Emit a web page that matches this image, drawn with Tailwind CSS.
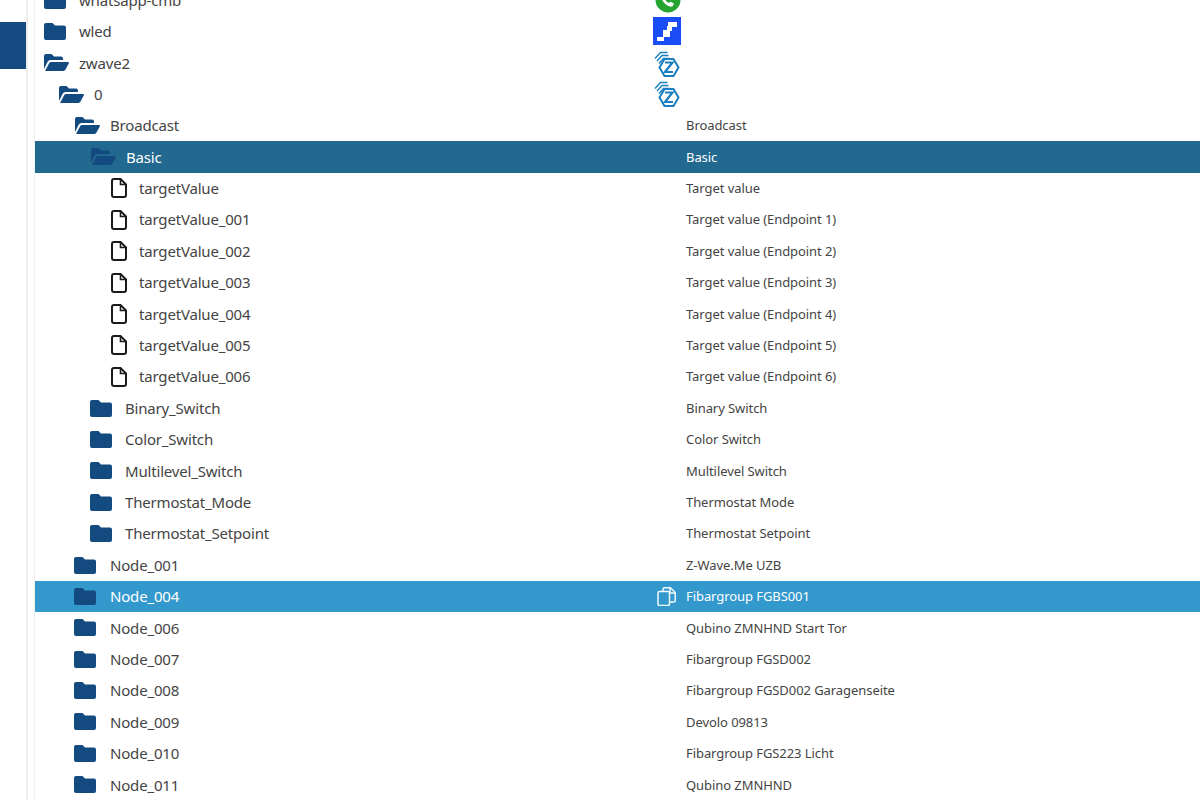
<!DOCTYPE html>
<html lang="de">
<head>
    <meta charset="UTF-8">
    <title>zwave2</title>
    <script src="https://cdn.jsdelivr.net/npm/@tailwindcss/browser@4"></script>
</head>
<body class="bg-white overflow-hidden h-[800px] font-['Noto_Sans','Open_Sans',sans-serif] text-[#444]">
<svg width="0" height="0" class="absolute">
    <symbol id="closed" viewBox="0 0 22 17"><path d="M2 0h6.500l2.500 2.500h9a2 2 0 0 1 2 2V15a2 2 0 0 1-2 2H2a2 2 0 0 1-2-2V2a2 2 0 0 1 2-2z" fill="#134a7f"/></symbol>
    <symbol id="open" viewBox="0 0 25 17"><path d="M0 15V2a2 2 0 0 1 2-2h5.500L10 2.500h7a2 2 0 0 1 2 2V6H6.500a3 3 0 0 0-2.700 1.600z" fill="#134a7f"/><path d="M1 17l4.300-8a2 2 0 0 1 1.700-1h17c.8 0 1.200.6.900 1.300L21.500 15.600a2.500 2.500 0 0 1-2.200 1.400z" fill="#134a7f"/></symbol>
    <symbol id="file" viewBox="0 0 16 20"><path d="M3 1h6.500L15 6.500V17a2 2 0 0 1-2 2H3a2 2 0 0 1-2-2V3a2 2 0 0 1 2-2z" fill="none" stroke="#1a1a1a" stroke-width="2"/><path d="M9.500 1.500v5H14.500" fill="none" stroke="#1a1a1a" stroke-width="1.600"/></symbol>
    <symbol id="zwave" viewBox="0 0 26 26"><g fill="none" stroke="#1a7fc1" stroke-width="2"><path d="M10.500 8h9l5 8.500-5 8.500h-9l-5-8.500z"/><path d="M11 11.500h7.500l-7.500 9.500h8" stroke-width="2.200"/><path d="M1 7.500L6.500 1.500h7M3 10l5-5.500h6.500M5 12.500l4.500-5h6" stroke-width="1.400"/></g></symbol>
</svg>

<!-- sidebar -->
<div class="fixed left-0 top-0 bottom-0 w-[28px] border-r-2 border-[#eeeeee]">
    <div class="mt-[22px] h-[47px] w-[26px] bg-[#134a7f]"></div>
</div>

<!-- tree -->
<div class="ml-[34px] border-l border-[#f0f0f0] mt-[-15.7px] text-[15px] tracking-[-0.18px]">
    <div class="flex items-center h-[31.4px] pl-[9px]"><svg class="w-[22px] h-[17px] shrink-0"><use href="#closed"/></svg><span class="ml-[13px] w-[576px]">whatsapp-cmb</span>
        <svg class="w-[26px] h-[26px] shrink-0" viewBox="0 0 26 26"><circle cx="13" cy="13" r="12.500" fill="#25a52f"/><path d="M6.500 7c-1.300 2.500-.2 5.500 2.500 8.500s6.200 5.200 8.700 3.700l1.300-2.700-3.500-1.800-1.600 1.400c-2-1-3.500-2.700-4.500-4.700l1.400-1.500-1.400-3.600z" fill="#fff"/><path d="M14 6.500a6 6 0 0 1 6 6" fill="none" stroke="#fff" stroke-width="1.400"/></svg></div>
    <div class="flex items-center h-[31.4px] pl-[9px]"><svg class="w-[22px] h-[17px] shrink-0"><use href="#closed"/></svg><span class="ml-[13px] w-[574px]">wled</span>
        <svg class="w-[28px] h-[28px] shrink-0" viewBox="0 0 28 28"><rect width="28" height="28" fill="#1a4df5"/><path d="M4 20h7v4H4zM10 13h7v7h-7zM15 5h9v5h-9zM14 9h5v5h-5z" fill="#fff"/></svg></div>
    <div class="flex items-center h-[31.4px] pl-[9px]"><svg class="w-[25px] h-[17px] shrink-0"><use href="#open"/></svg><span class="ml-[10px] w-[575px]">zwave2</span>
        <svg class="w-[26px] h-[26px] shrink-0 mt-[2px]"><use href="#zwave"/></svg></div>
    <div class="flex items-center h-[31.4px] pl-[24px]"><svg class="w-[25px] h-[17px] shrink-0"><use href="#open"/></svg><span class="ml-[10px] w-[560px]">0</span>
        <svg class="w-[26px] h-[26px] shrink-0"><use href="#zwave"/></svg></div>

    <div class="flex items-center h-[31.4px] pl-[40px]"><svg class="w-[25px] h-[17px] shrink-0"><use href="#open"/></svg><span class="ml-[10px] w-[576px]">Broadcast</span><span class="text-[13px] tracking-[-0.07px] pt-px">Broadcast</span></div>
    <div class="flex items-center h-[31.4px] pl-[56px] bg-[#21698f] text-white"><svg class="w-[25px] h-[17px] shrink-0"><use href="#open"/></svg><span class="ml-[10px] w-[560px]">Basic</span><span class="text-[13px] tracking-[-0.07px] pt-px">Basic</span></div>

    <div class="flex items-center h-[31.4px] pl-[76px]"><svg class="w-[16px] h-[20px] shrink-0"><use href="#file"/></svg><span class="ml-[12px] w-[547px]">targetValue</span><span class="text-[13px] tracking-[-0.07px] pt-px">Target value</span></div>
    <div class="flex items-center h-[31.4px] pl-[76px]"><svg class="w-[16px] h-[20px] shrink-0"><use href="#file"/></svg><span class="ml-[12px] w-[547px]">targetValue_001</span><span class="text-[13px] tracking-[-0.07px] pt-px">Target value (Endpoint 1)</span></div>
    <div class="flex items-center h-[31.4px] pl-[76px]"><svg class="w-[16px] h-[20px] shrink-0"><use href="#file"/></svg><span class="ml-[12px] w-[547px]">targetValue_002</span><span class="text-[13px] tracking-[-0.07px] pt-px">Target value (Endpoint 2)</span></div>
    <div class="flex items-center h-[31.4px] pl-[76px]"><svg class="w-[16px] h-[20px] shrink-0"><use href="#file"/></svg><span class="ml-[12px] w-[547px]">targetValue_003</span><span class="text-[13px] tracking-[-0.07px] pt-px">Target value (Endpoint 3)</span></div>
    <div class="flex items-center h-[31.4px] pl-[76px]"><svg class="w-[16px] h-[20px] shrink-0"><use href="#file"/></svg><span class="ml-[12px] w-[547px]">targetValue_004</span><span class="text-[13px] tracking-[-0.07px] pt-px">Target value (Endpoint 4)</span></div>
    <div class="flex items-center h-[31.4px] pl-[76px]"><svg class="w-[16px] h-[20px] shrink-0"><use href="#file"/></svg><span class="ml-[12px] w-[547px]">targetValue_005</span><span class="text-[13px] tracking-[-0.07px] pt-px">Target value (Endpoint 5)</span></div>
    <div class="flex items-center h-[31.4px] pl-[76px]"><svg class="w-[16px] h-[20px] shrink-0"><use href="#file"/></svg><span class="ml-[12px] w-[547px]">targetValue_006</span><span class="text-[13px] tracking-[-0.07px] pt-px">Target value (Endpoint 6)</span></div>

    <div class="flex items-center h-[31.4px] pl-[55px]"><svg class="w-[22px] h-[17px] shrink-0"><use href="#closed"/></svg><span class="ml-[13px] w-[561px]">Binary_Switch</span><span class="text-[13px] tracking-[-0.07px] pt-px">Binary Switch</span></div>
    <div class="flex items-center h-[31.4px] pl-[55px]"><svg class="w-[22px] h-[17px] shrink-0"><use href="#closed"/></svg><span class="ml-[13px] w-[561px]">Color_Switch</span><span class="text-[13px] tracking-[-0.07px] pt-px">Color Switch</span></div>
    <div class="flex items-center h-[31.4px] pl-[55px]"><svg class="w-[22px] h-[17px] shrink-0"><use href="#closed"/></svg><span class="ml-[13px] w-[561px]">Multilevel_Switch</span><span class="text-[13px] tracking-[-0.07px] pt-px">Multilevel Switch</span></div>
    <div class="flex items-center h-[31.4px] pl-[55px]"><svg class="w-[22px] h-[17px] shrink-0"><use href="#closed"/></svg><span class="ml-[13px] w-[561px]">Thermostat_Mode</span><span class="text-[13px] tracking-[-0.07px] pt-px">Thermostat Mode</span></div>
    <div class="flex items-center h-[31.4px] pl-[55px]"><svg class="w-[22px] h-[17px] shrink-0"><use href="#closed"/></svg><span class="ml-[13px] w-[561px]">Thermostat_Setpoint</span><span class="text-[13px] tracking-[-0.07px] pt-px">Thermostat Setpoint</span></div>

    <div class="flex items-center h-[31.4px] pl-[39px]"><svg class="w-[22px] h-[17px] shrink-0"><use href="#closed"/></svg><span class="ml-[14px] w-[576px]">Node_001</span><span class="text-[13px] tracking-[-0.07px] pt-px">Z-Wave.Me UZB</span></div>
    <div class="flex items-center h-[31.4px] pl-[39px] bg-[#3399cc] text-white"><svg class="w-[22px] h-[17px] shrink-0"><use href="#closed"/></svg><span class="ml-[14px] w-[547px]">Node_004</span>
        <svg class="w-[19px] h-[19px] mr-[10px] shrink-0" viewBox="0 0 19 19" fill="none" stroke="#f2f9fc" stroke-width="1.500"><path d="M6 4V2.200A1.500 1.500 0 0 1 7.500.8h6l4.700 4.700v8A1.500 1.500 0 0 1 16.700 15H13"/><path d="M13 1v5h5"/><rect x="1" y="4.500" width="11.500" height="14" rx="1.500"/></svg>
        <span class="text-[13px] tracking-[-0.07px] pt-px">Fibargroup FGBS001</span></div>
    <div class="flex items-center h-[31.4px] pl-[39px]"><svg class="w-[22px] h-[17px] shrink-0"><use href="#closed"/></svg><span class="ml-[14px] w-[576px]">Node_006</span><span class="text-[13px] tracking-[-0.07px] pt-px">Qubino ZMNHND Start Tor</span></div>
    <div class="flex items-center h-[31.4px] pl-[39px]"><svg class="w-[22px] h-[17px] shrink-0"><use href="#closed"/></svg><span class="ml-[14px] w-[576px]">Node_007</span><span class="text-[13px] tracking-[-0.07px] pt-px">Fibargroup FGSD002</span></div>
    <div class="flex items-center h-[31.4px] pl-[39px]"><svg class="w-[22px] h-[17px] shrink-0"><use href="#closed"/></svg><span class="ml-[14px] w-[576px]">Node_008</span><span class="text-[13px] tracking-[-0.07px] pt-px">Fibargroup FGSD002 Garagenseite</span></div>
    <div class="flex items-center h-[31.4px] pl-[39px]"><svg class="w-[22px] h-[17px] shrink-0"><use href="#closed"/></svg><span class="ml-[14px] w-[576px]">Node_009</span><span class="text-[13px] tracking-[-0.07px] pt-px">Devolo 09813</span></div>
    <div class="flex items-center h-[31.4px] pl-[39px]"><svg class="w-[22px] h-[17px] shrink-0"><use href="#closed"/></svg><span class="ml-[14px] w-[576px]">Node_010</span><span class="text-[13px] tracking-[-0.07px] pt-px">Fibargroup FGS223 Licht</span></div>
    <div class="flex items-center h-[31.4px] pl-[39px]"><svg class="w-[22px] h-[17px] shrink-0"><use href="#closed"/></svg><span class="ml-[14px] w-[576px]">Node_011</span><span class="text-[13px] tracking-[-0.07px] pt-px">Qubino ZMNHND</span></div>
</div>
</body>
</html>
